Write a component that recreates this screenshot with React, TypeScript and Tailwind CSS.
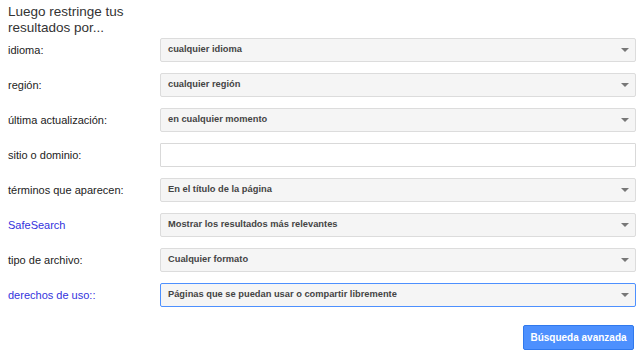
import React from "react";

type Row = {
  label: string;
  value?: string;
  link?: boolean;
  input?: boolean;
  focused?: boolean;
};

const rows: Row[] = [
  { label: "idioma:", value: "cualquier idioma" },
  { label: "región:", value: "cualquier región" },
  { label: "última actualización:", value: "en cualquier momento" },
  { label: "sitio o dominio:", input: true },
  { label: "términos que aparecen:", value: "En el título de la página" },
  { label: "SafeSearch", value: "Mostrar los resultados más relevantes", link: true },
  { label: "tipo de archivo:", value: "Cualquier formato" },
  {
    label: "derechos de uso::",
    value: "Páginas que se puedan usar o compartir libremente",
    link: true,
    focused: true,
  },
];

const App = () => {
  return (
    <div className="w-[640px] h-[354px] bg-white pl-2 pr-1 pt-[4px] font-['Liberation_Sans',Arial,sans-serif] text-[#222]">
      <h2 className="text-[13.5px] leading-[16px] font-normal text-[#333] w-[130px] h-[34px]">
        Luego restringe tus resultados por...
      </h2>
      <div className="flex flex-col gap-[11px]">
        {rows.map((r) => (
          <div key={r.label} className="flex items-center h-[24px]">
            <div
              className={`w-[152px] shrink-0 text-[11px] ${
                r.link ? "text-[#3333dd]" : "text-[#222]"
              }`}
            >
              {r.label}
            </div>
            {r.input ? (
              <div className="flex-1 h-[24px] bg-white border border-[#d9d9d9] rounded-[1px]" />
            ) : (
              <div
                className={`flex-1 h-[24px] flex items-center justify-between pl-[7px] pr-[6px] bg-[#f5f5f5] rounded-[2px] border ${
                  r.focused ? "border-[#4d90fe]" : "border-[#dcdcdc]"
                }`}
              >
                <span className="text-[9.3px] font-bold text-[#444]">{r.value}</span>
                <span className="w-0 h-0 border-l-[4px] border-r-[4px] border-t-[4px] border-l-transparent border-r-transparent border-t-[#777]" />
              </div>
            )}
          </div>
        ))}
      </div>
      <div className="flex justify-end mt-[18px] pr-[2px]">
        <button className="w-[111px] h-[25px] bg-[#4d90fe] border border-[#3079ed] rounded-[2px] text-white text-[10px] font-bold">
          Búsqueda avanzada
        </button>
      </div>
    </div>
  );
};

export default App;
